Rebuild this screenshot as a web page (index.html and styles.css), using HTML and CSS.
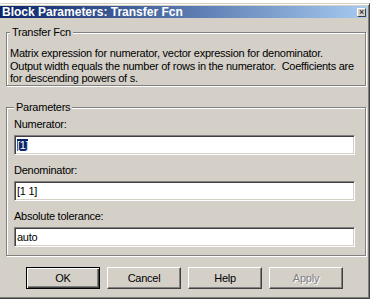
FILE: index.html
```html
<!DOCTYPE html>
<html lang="en">
<head>
    <meta charset="UTF-8">
    <meta name="viewport" content="width=device-width, initial-scale=1.0">
    <title>Block Parameters: Transfer Fcn</title>
    <link rel="stylesheet" href="styles.css">
</head>
<body>
    <div class="window">
        <div class="titlebar">
            <span class="title">Block Parameters: Transfer Fcn</span>
            <span class="close">&times;</span>
        </div>

        <div class="dialog">
            <fieldset class="group desc">
                <legend>Transfer Fcn</legend>
                <p>Matrix expression for numerator, vector expression for denominator.<br>Output width equals the number of rows in the numerator.&nbsp; Coefficients are<br>for descending powers of s.</p>
            </fieldset>

            <fieldset class="group params">
                <legend>Parameters</legend>
                <div class="label">Numerator:</div>
                <div class="field"><span class="selected">[1]</span></div>
                <div class="label">Denominator:</div>
                <div class="field">[1 1]</div>
                <div class="label">Absolute tolerance:</div>
                <div class="field">auto</div>
            </fieldset>

            <div class="buttons">
                <button class="btn default">OK</button>
                <button class="btn">Cancel</button>
                <button class="btn">Help</button>
                <button class="btn" disabled>Apply</button>
            </div>
        </div>
    </div>
</body>
</html>
```

FILE: styles.css
```css
body {
    margin: 0;
    background: #fff;
    font-family: 'Liberation Sans', Arial, sans-serif;
    font-size: 11px;
    letter-spacing: -0.25px;
    color: #000;
}

.window {
    box-sizing: border-box;
    width: 374px;
    height: 296px;
    margin: 3px 0 0 -4px;
    background: #d4d0c8;
    border: 1px solid;
    border-color: #d4d0c8 #404040 #404040 #d4d0c8;
    padding: 2px;
    box-shadow: inset 1px 1px #fff, inset -1px -1px #808080;
}

.titlebar {
    height: 12px;
    display: flex;
    align-items: center;
    justify-content: space-between;
    padding: 0 1px 0 3px;
    background: linear-gradient(to right, #0a246a, #a6caf0);
}

.title {
    color: #fff;
    font-weight: bold;
    font-size: 12px;
    letter-spacing: 0;
    line-height: 12px;
}

.close {
    box-sizing: border-box;
    width: 9px;
    height: 9px;
    background: #d4d0c8;
    border: 1px solid;
    border-color: #fff #404040 #404040 #fff;
    font-size: 9px;
    line-height: 6px;
    text-align: center;
    color: #000;
}

.dialog {
    padding: 8px 1px 0 7px;
}

.group {
    margin: 0;
    border: 1px solid #808080;
    box-shadow: inset 1px 1px #fff, 1px 1px #fff;
    min-width: 0;
}

.group legend {
    padding: 0 2px;
    line-height: 13px;
    background: #d4d0c8;
}

.desc {
    padding: 8px 3px 0 3px;
}

.desc p {
    margin: 0;
    line-height: 12.5px;
}

.params {
    margin-top: 15px;
    padding: 4px 10px 8px 7px;
}

.label {
    line-height: 13px;
    margin-bottom: 4.5px;
}

.field {
    box-sizing: border-box;
    height: 20px;
    margin-bottom: 8.5px;
    padding: 3px 2px 0 2px;
    background: #fff;
    border: 1px solid;
    border-color: #808080 #fff #fff #808080;
    box-shadow: inset 1px 1px #404040, inset -1px -1px #d4d0c8;
    line-height: 13px;
}

.field:last-child {
    margin-bottom: 0;
}

.selected {
    background: #0a246a;
    color: #fff;
}

.buttons {
    display: flex;
    gap: 7px;
    margin-top: 11px;
    padding-left: 20px;
}

.btn {
    box-sizing: border-box;
    width: 74px;
    height: 22px;
    padding: 0;
    font-family: inherit;
    font-size: 11px;
    letter-spacing: inherit;
    color: #000;
    background: #d4d0c8;
    border: 1px solid;
    border-color: #fff #404040 #404040 #fff;
    box-shadow: inset -1px -1px #808080;
}

.btn.default {
    border-color: #000;
    box-shadow: inset 1px 1px #fff, inset -1px -1px #404040, inset -2px -2px #808080;
}

.btn:disabled {
    color: #808080;
    text-shadow: 1px 1px #fff;
}
```
